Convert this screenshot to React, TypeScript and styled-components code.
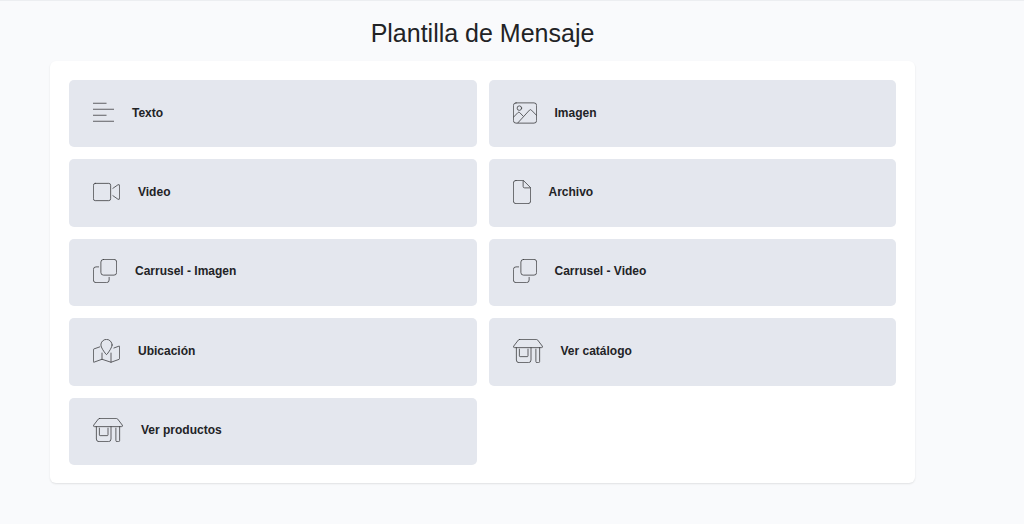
import React from "react";
import styled, { createGlobalStyle } from "styled-components";

const GlobalStyle = createGlobalStyle`
  *, *::before, *::after {
    box-sizing: border-box;
  }
  body {
    margin: 0;
    background: #f9fafc;
    color: #222326;
    font-family: "Liberation Sans", Arial, sans-serif;
  }
`;

const Page = styled.main`
  min-height: 100vh;
  padding: 17px 109px 40px 50px;
  border-top: 1px solid #eceef1;
`;

const Title = styled.h1`
  margin: 0 0 12px;
  font-size: 25px;
  font-weight: 400;
  line-height: 31px;
  text-align: center;
`;

const Card = styled.section`
  padding: 19px 19px 18px;
  border-radius: 6px;
  background: #fff;
  box-shadow: 0 1px 2px rgba(0, 0, 0, 0.1);
`;

const TemplateGrid = styled.div`
  display: grid;
  grid-template-columns: repeat(2, minmax(0, 1fr));
  grid-auto-rows: 1fr;
  gap: 12px;
  min-height: 385px;
`;

const TemplateButton = styled.button`
  display: flex;
  align-items: center;
  gap: 18px;
  padding: 20px 24px 22px;
  border: 0;
  border-radius: 5px;
  background: #e4e7ee;
  color: #222326;
  font: 700 12px/18px "Liberation Sans", Arial, sans-serif;
  text-align: left;
  cursor: pointer;

  &:hover {
    background: #dadee8;
  }
`;

const Glyph = styled.svg`
  flex: none;
  height: 24px;
  fill: none;
  stroke: #3c3d40;
  stroke-width: 17;
  stroke-linecap: round;
  stroke-linejoin: round;
`;

type IconName = "text" | "image" | "video" | "file" | "clone" | "map" | "shop";

const icons: Record<IconName, { width: number; shape: React.ReactNode }> = {
  text: {
    width: 448,
    shape: <path d="M8 48H280M8 176H440M8 304H280M8 432H440" />,
  },
  image: {
    width: 512,
    shape: (
      <>
        <rect x="8" y="40" width="496" height="432" rx="56" />
        <circle cx="136" cy="152" r="48" />
        <path d="M10 346L106 246Q124 228 142 246L214 320M104 466L352 194Q372 174 392 194L502 306" />
      </>
    ),
  },
  video: {
    width: 576,
    shape: (
      <>
        <rect x="8" y="72" width="368" height="368" rx="40" />
        <path d="M424 178L530 104Q568 84 568 124V388Q568 428 530 408L424 334" />
      </>
    ),
  },
  file: {
    width: 384,
    shape: (
      <path d="M64 8H204Q220 8 232 20L364 152Q376 164 376 180V448A56 56 0 0 1 320 504H64A56 56 0 0 1 8 448V64A56 56 0 0 1 64 8ZM216 10V136A32 32 0 0 0 248 168H374" />
    ),
  },
  clone: {
    width: 512,
    shape: (
      <>
        <rect x="168" y="8" width="336" height="336" rx="56" />
        <path d="M120 168H64A56 56 0 0 0 8 224V448A56 56 0 0 0 64 504H288A56 56 0 0 0 344 448V392" />
      </>
    ),
  },
  map: {
    width: 576,
    shape: (
      <>
        <path d="M408 128C408 176 344 268 300 324Q288 338 276 324C232 268 168 176 168 128A120 120 0 0 1 408 128Z" />
        <path d="M144 168L20 212Q8 216 8 230V484Q8 500 22 494L192 432L384 496L556 434Q568 430 568 416V162Q568 146 554 152L446 192M192 300V432M384 300V496" />
      </>
    ),
  },
  shop: {
    width: 640,
    shape: (
      <>
        <path d="M142 8H498Q516 8 526 22L624 150Q642 184 606 184H34Q-2 184 16 150L114 22Q124 8 142 8Z" />
        <path d="M72 184V448A56 56 0 0 0 128 504H328A56 56 0 0 0 384 448V184M136 216V360Q136 376 152 376H304Q320 376 320 360V216M488 216V480Q488 504 512 504H544Q568 504 568 480V184" />
      </>
    ),
  },
};

function TemplateIcon({ name }: { name: IconName }) {
  const { width, shape } = icons[name];
  return (
    <Glyph viewBox={`0 0 ${width} 512`} width={(width * 24) / 512} aria-hidden="true">
      {shape}
    </Glyph>
  );
}

const templates: { icon: IconName; label: string }[] = [
  { icon: "text", label: "Texto" },
  { icon: "image", label: "Imagen" },
  { icon: "video", label: "Video" },
  { icon: "file", label: "Archivo" },
  { icon: "clone", label: "Carrusel - Imagen" },
  { icon: "clone", label: "Carrusel - Video" },
  { icon: "map", label: "Ubicación" },
  { icon: "shop", label: "Ver catálogo" },
  { icon: "shop", label: "Ver productos" },
];

export default function App() {
  return (
    <>
      <GlobalStyle />
      <Page>
        <Title>Plantilla de Mensaje</Title>
        <Card>
          <TemplateGrid>
            {templates.map(({ icon, label }) => (
              <TemplateButton key={label} type="button">
                <TemplateIcon name={icon} />
                <span>{label}</span>
              </TemplateButton>
            ))}
          </TemplateGrid>
        </Card>
      </Page>
    </>
  );
}
